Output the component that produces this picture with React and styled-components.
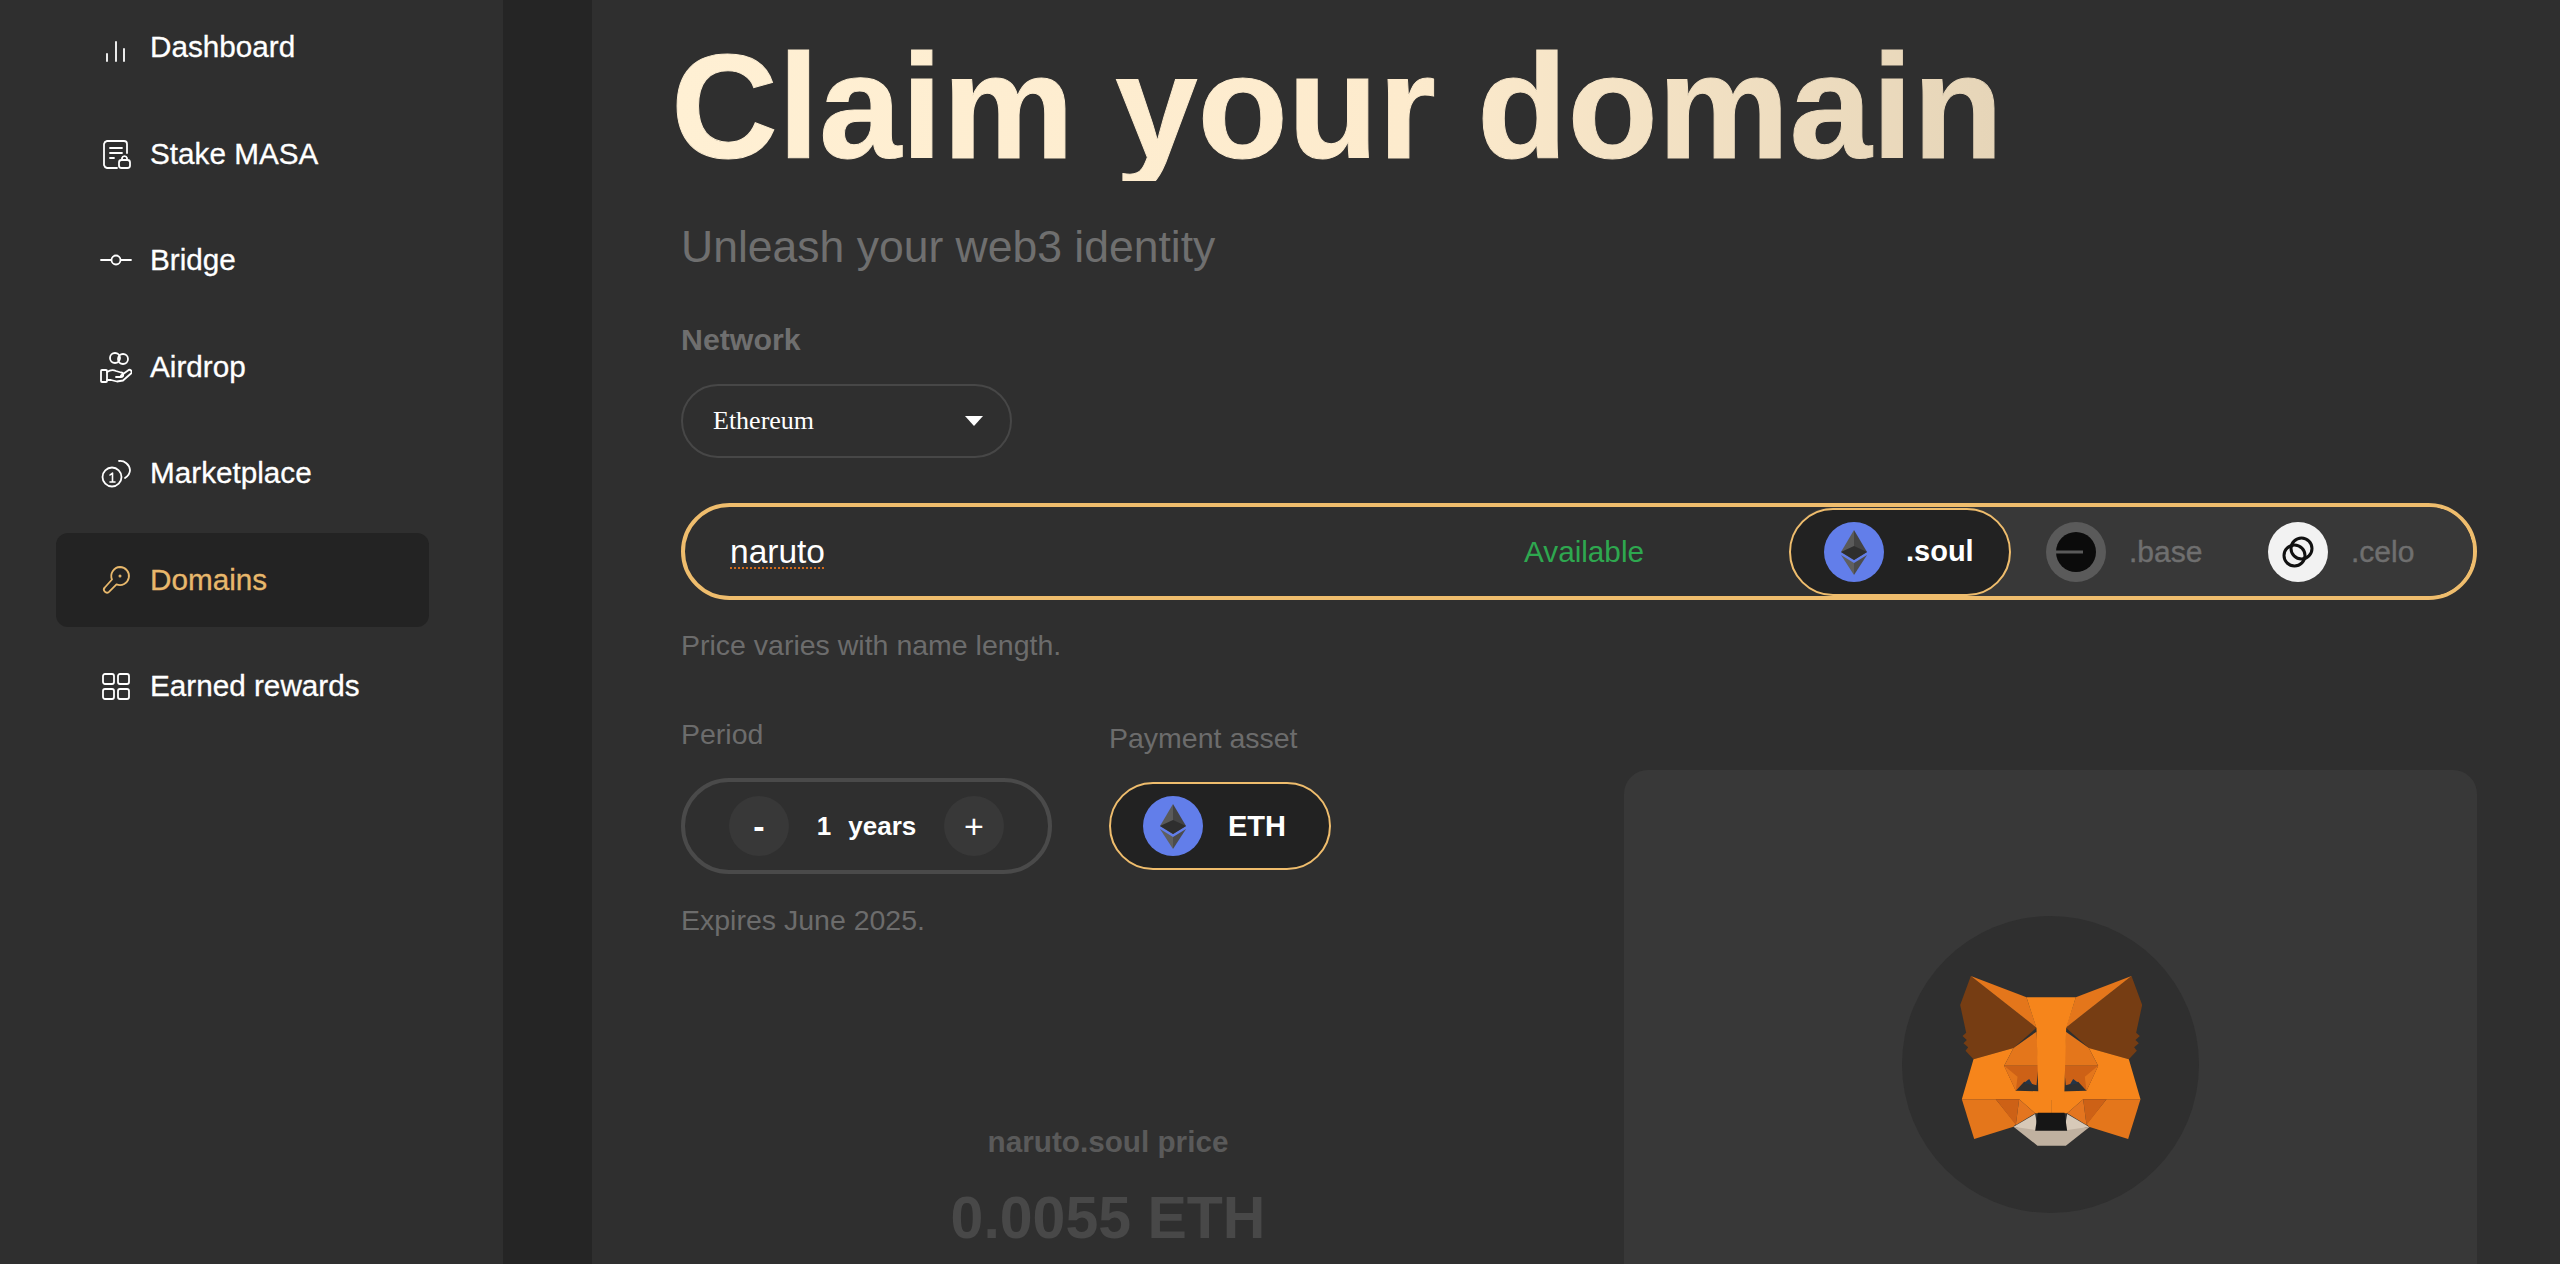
import React from "react";
import styled, { createGlobalStyle } from "styled-components";

const GlobalStyle = createGlobalStyle`
  html, body {
    margin: 0;
    height: 100%;
    overflow: hidden;
    background: #2f2f2f;
    font-family: "Liberation Sans", Arial, sans-serif;
  }
  * { box-sizing: border-box; }
`;

const Page = styled.div`
  display: flex;
  width: 2560px;
  height: 1264px;
  overflow: hidden;
  background: #2f2f2f;
`;

const Sidebar = styled.nav`
  flex: 0 0 503px;
  display: flex;
  flex-direction: column;
  gap: 12.5px;
  padding-left: 56px;
`;

const NavItem = styled.div`
  width: 373px;
  height: 94px;
  display: flex;
  align-items: center;
  gap: 18px;
  padding-left: 44px;
  border-radius: 12px;
  font-size: 29.7px;
  -webkit-text-stroke: 0.3px currentColor;
  color: ${(p) => (p.$active ? "#e8b86c" : "#ffffff")};
  background: ${(p) => (p.$active ? "#232323" : "transparent")};
`;

const NavIcon = styled.svg`
  width: 32px;
  height: 32px;
  flex: none;
  fill: none;
  stroke: currentColor;
  stroke-width: 1.8;
  stroke-linecap: round;
  stroke-linejoin: round;
`;

const Gutter = styled.div`
  flex: 0 0 89px;
  background: #252525;
`;

const Main = styled.main`
  flex: 1;
  padding: 33px 84px 0 89px;
`;

const Title = styled.h1`
  margin: 0 0 0 -10px;
  font-size: 148px;
  line-height: 148px;
  font-weight: 700;
  width: max-content;
  -webkit-text-stroke: 1px transparent;
  background: linear-gradient(90deg, #fff0d4 0%, #fdebcd 55%, #e6d5b8 100%);
  -webkit-background-clip: text;
  background-clip: text;
  color: transparent;
`;

const Subtitle = styled.p`
  margin: 40px 0 0;
  font-size: 44.5px;
  line-height: 52px;
  color: #6f6f6f;
`;

const SectionLabel = styled.div`
  margin-top: 49px;
  font-size: 30.3px;
  line-height: 36px;
  font-weight: 700;
  color: #6f6f6f;
`;

const SelectBox = styled.div`
  margin-top: 26px;
  width: 331px;
  height: 74px;
  padding: 0 27px 0 30px;
  display: flex;
  align-items: center;
  justify-content: space-between;
  border: 2px solid #474747;
  border-radius: 37px;
  font-family: "Liberation Serif", "Times New Roman", serif;
  font-size: 26px;
  color: #ffffff;
`;

const Caret = styled.span`
  width: 0;
  height: 0;
  border-left: 9px solid transparent;
  border-right: 9px solid transparent;
  border-top: 10px solid #ffffff;
`;

const DomainBar = styled.div`
  margin-top: 45px;
  height: 97px;
  display: flex;
  align-items: center;
  border: 4px solid #efbd6d;
  border-radius: 49px;
`;

const DomainName = styled.span`
  flex: 1;
  padding-left: 45px;
  font-size: 33.5px;
  color: #ffffff;
  text-decoration: underline dotted #cf6a1c 2px;
  text-underline-offset: 5px;
  text-decoration-skip-ink: none;
`;

const Available = styled.span`
  margin-right: 145px;
  font-size: 29.7px;
  color: #2ea84f;
`;

const TabGroup = styled.div`
  display: flex;
  height: 89px;
  padding-right: 18px;
  align-items: center;
  border-radius: 44px;
  background: #383838;
`;

const Tab = styled.div`
  width: 222px;
  height: 88px;
  display: flex;
  align-items: center;
  gap: ${(p) => (p.$active ? 22 : 23)}px;
  padding-left: 33px;
  border: 2px solid ${(p) => (p.$active ? "#efbd6d" : "transparent")};
  border-radius: 44px;
  background: ${(p) => (p.$active ? "#222222" : "transparent")};
  font-size: ${(p) => (p.$active ? 29 : 30)}px;
  font-weight: ${(p) => (p.$active ? 700 : 400)};
  color: ${(p) => (p.$active ? "#ffffff" : "#6f6f6f")};
  -webkit-text-stroke: ${(p) => (p.$active ? "0" : "0.4px currentColor")};
`;

const TokenIcon = styled.svg`
  width: 60px;
  height: 60px;
  flex: none;
`;

const Hint = styled.p`
  margin: ${(p) => p.$top}px 0 0;
  font-size: 28.5px;
  line-height: 36px;
  color: #6c6c6c;
`;

const Columns = styled.section`
  margin-top: 53px;
  display: grid;
  grid-template-columns: 854px 853px;
  gap: 89px;
`;

const LeftColumn = styled.div`
  display: flex;
  flex-direction: column;
`;

const OptionRow = styled.div`
  display: flex;
  gap: 57px;
`;

const Option = styled.div`
  display: flex;
  flex-direction: column;
  padding-top: ${(p) => p.$offset || 0}px;
`;

const OptionLabel = styled.div`
  font-size: 28.5px;
  line-height: 36px;
  color: #6c6c6c;
`;

const Stepper = styled.div`
  margin-top: 26px;
  width: 371px;
  height: 96px;
  display: flex;
  align-items: center;
  padding: 0 44px;
  border: 4px solid #4a4a4a;
  border-radius: 48px;
`;

const StepButton = styled.div`
  width: 60px;
  height: 60px;
  flex: none;
  display: flex;
  align-items: center;
  justify-content: center;
  border-radius: 50%;
  background: #383838;
  color: #ffffff;
  font-size: 34px;
  font-weight: ${(p) => (p.$bold ? 700 : 400)};
`;

const StepValue = styled.div`
  flex: 1;
  display: flex;
  justify-content: center;
  gap: 17px;
  font-size: 26px;
  font-weight: 700;
  color: #ffffff;
`;

const AssetPill = styled.div`
  margin-top: 26px;
  width: 222px;
  height: 88px;
  display: flex;
  align-items: center;
  gap: 25px;
  padding-left: 32px;
  border: 2px solid #efbd6d;
  border-radius: 44px;
  background: #222222;
  font-size: 29px;
  font-weight: 700;
  color: #ffffff;
`;

const PriceBlock = styled.div`
  margin-top: 186px;
  display: flex;
  flex-direction: column;
  align-items: center;
`;

const PriceLabel = styled.div`
  font-size: 29.7px;
  line-height: 36px;
  font-weight: 700;
  color: #5a5a5a;
`;

const PriceValue = styled.div`
  margin-top: 23px;
  font-size: 59px;
  line-height: 70px;
  font-weight: 700;
  color: #484848;
`;

const WalletCard = styled.div`
  margin-top: 54px;
  height: 700px;
  padding-top: 146px;
  display: flex;
  justify-content: center;
  align-items: flex-start;
  border-radius: 24px;
  background: #383838;
`;

const FoxBadge = styled.div`
  width: 297px;
  height: 297px;
  padding-bottom: 7px;
  display: flex;
  align-items: center;
  justify-content: center;
  border-radius: 50%;
  background: #2f2f2f;
`;

const FoxSvg = styled.svg`
  width: 182px;
  height: 170px;
`;

const navIcons = {
  dashboard: <path d="M7 23v7M16 11v19M24 18v12" />,
  stake: (
    <>
      <path d="M17 30H7a4 4 0 0 1-3-3V6a4 4 0 0 1 3-3h17a3 3 0 0 1 3 3v9" />
      <path d="M10 10h12M10 15h12M10 20h4" />
      <rect x="19" y="22" width="11" height="8" rx="2.5" />
      <path d="M22 22v-2a2.6 2.6 0 0 1 5 0v2" />
    </>
  ),
  bridge: (
    <>
      <circle cx="16" cy="16" r="4.5" />
      <path d="M1 16h10M21 16h10" />
    </>
  ),
  airdrop: (
    <>
      <circle cx="15" cy="7" r="5" />
      <circle cx="23" cy="8" r="5" />
      <rect x="1" y="19" width="6" height="12" rx="1" />
      <path d="M7 21c3-2 6-2.5 9-1l5 1.5a2.2 2.2 0 0 1 0 4.5h-5" />
      <path d="M7 29h4l6 1.5 6-1 8-7a2 2 0 0 0-3-3l-7 5" />
    </>
  ),
  marketplace: (
    <>
      <circle cx="12" cy="20" r="9.5" />
      <path d="M19 4a10 10 0 0 1 11 9c0 3-2 6-5 8" />
      <path d="M10 18l2.5-2v9M10 25h5" strokeWidth="1.6" />
    </>
  ),
  domains: (
    <>
      <path d="M20 3a9 9 0 1 1-3.5 17.3l-7.5 7.5a3 3 0 0 1-4.2-.1 3 3 0 0 1 0-4.2l7.2-8A9 9 0 0 1 20 3z" />
      <circle cx="20" cy="12" r="0.6" fill="currentColor" />
    </>
  ),
  rewards: (
    <>
      <rect x="3" y="4" width="11" height="10" rx="2" />
      <rect x="18" y="4" width="11" height="10" rx="2" />
      <rect x="3" y="19" width="11" height="10" rx="2" />
      <rect x="18" y="19" width="11" height="10" rx="2" />
    </>
  ),
};

const navItems = [
  { key: "dashboard", label: "Dashboard" },
  { key: "stake", label: "Stake MASA" },
  { key: "bridge", label: "Bridge" },
  { key: "airdrop", label: "Airdrop" },
  { key: "marketplace", label: "Marketplace" },
  { key: "domains", label: "Domains", active: true },
  { key: "rewards", label: "Earned rewards" },
];

const EthIcon = () => (
  <TokenIcon viewBox="0 0 60 60">
    <circle cx="30" cy="30" r="30" fill="#627eea" />
    <polygon points="30,8 17,30 30,38" fill="#5a5a5a" />
    <polygon points="30,8 43,30 30,38" fill="#434343" />
    <polygon points="30,24 17,30 30,38 43,30" fill="#2e2e2e" />
    <polygon points="17,33 30,41 30,53" fill="#5f5f5f" />
    <polygon points="43,33 30,41 30,53" fill="#4c4c4c" />
  </TokenIcon>
);

const BaseIcon = () => (
  <TokenIcon viewBox="0 0 60 60">
    <circle cx="30" cy="30" r="30" fill="#5a5a5a" />
    <circle cx="30" cy="30" r="20" fill="#0b0b0b" />
    <rect x="10" y="28.5" width="27" height="3" fill="#5a5a5a" />
  </TokenIcon>
);

const CeloIcon = () => (
  <TokenIcon viewBox="0 0 60 60">
    <circle cx="30" cy="30" r="30" fill="#f2f2f2" />
    <circle cx="26.5" cy="33.5" r="10.5" fill="none" stroke="#111111" strokeWidth="3" />
    <circle cx="33.5" cy="26.5" r="10.5" fill="none" stroke="#111111" strokeWidth="3" />
  </TokenIcon>
);

const foxHalf = (
  <>
    <polygon
      fill="#763d13"
      points="330,228 527,383 458,444 338,478 314,452 322,442 308,430 318,420 305,408 316,398 298,315"
    />
    <polygon fill="#e4761b" points="330,228 497,292 527,383" />
    <polygon
      fill="#f6851b"
      points="338,478 458,444 430,497 465,572 571,575 571,640 523,640 475,598 303,598"
    />
    <polygon fill="#e4761b" points="527,395 458,444 430,497 533,497" />
    <polygon fill="#cd6116" points="430,497 533,497 527,556 490,545 465,572" />
    <polygon fill="#e4761b" points="430,497 465,572 470,530" />
    <polygon fill="#233447" points="489,549 505,537 516,556" />
    <polygon fill="#e4761b" points="303,598 405,598 465,672 458,680 340,717" />
    <polygon fill="#cd6116" points="405,598 475,598 465,675" />
    <polygon fill="#e4751f" points="475,598 523,640 465,675" />
    <polygon fill="#d7c9b8" points="458,680 523,642 533,700" />
  </>
);

const Fox = () => (
  <FoxSvg viewBox="298 228 545 510">
    {foxHalf}
    <g transform="translate(1142 0) scale(-1 1)">{foxHalf}</g>
    <polygon fill="#f6851b" points="497,292 645,292 616,385 610,600 533,600 527,385" />
    <polygon fill="#c0b1a0" points="458,680 523,690 620,690 687,680 615,737 530,737" />
    <polygon fill="#161616" points="531,638 611,638 619,692 523,692" />
  </FoxSvg>
);

export default function App() {
  return (
    <Page>
      <GlobalStyle />
      <Sidebar>
        {navItems.map((item) => (
          <NavItem key={item.key} $active={item.active}>
            <NavIcon viewBox="0 0 32 32">{navIcons[item.key]}</NavIcon>
            {item.label}
          </NavItem>
        ))}
      </Sidebar>
      <Gutter />
      <Main>
        <Title>Claim your domain</Title>
        <Subtitle>Unleash your web3 identity</Subtitle>
        <SectionLabel>Network</SectionLabel>
        <SelectBox>
          Ethereum
          <Caret />
        </SelectBox>
        <DomainBar>
          <DomainName>naruto</DomainName>
          <Available>Available</Available>
          <TabGroup>
            <Tab $active>
              <EthIcon />
              .soul
            </Tab>
            <Tab>
              <BaseIcon />
              .base
            </Tab>
            <Tab>
              <CeloIcon />
              .celo
            </Tab>
          </TabGroup>
        </DomainBar>
        <Hint $top={27}>Price varies with name length.</Hint>
        <Columns>
          <LeftColumn>
            <OptionRow>
              <Option>
                <OptionLabel>Period</OptionLabel>
                <Stepper>
                  <StepButton $bold>-</StepButton>
                  <StepValue>
                    <span>1</span>
                    <span>years</span>
                  </StepValue>
                  <StepButton>+</StepButton>
                </Stepper>
              </Option>
              <Option $offset={4}>
                <OptionLabel>Payment asset</OptionLabel>
                <AssetPill>
                  <EthIcon />
                  ETH
                </AssetPill>
              </Option>
            </OptionRow>
            <Hint $top={28}>Expires June 2025.</Hint>
            <PriceBlock>
              <PriceLabel>naruto.soul price</PriceLabel>
              <PriceValue>0.0055 ETH</PriceValue>
            </PriceBlock>
          </LeftColumn>
          <WalletCard>
            <FoxBadge>
              <Fox />
            </FoxBadge>
          </WalletCard>
        </Columns>
      </Main>
    </Page>
  );
}
